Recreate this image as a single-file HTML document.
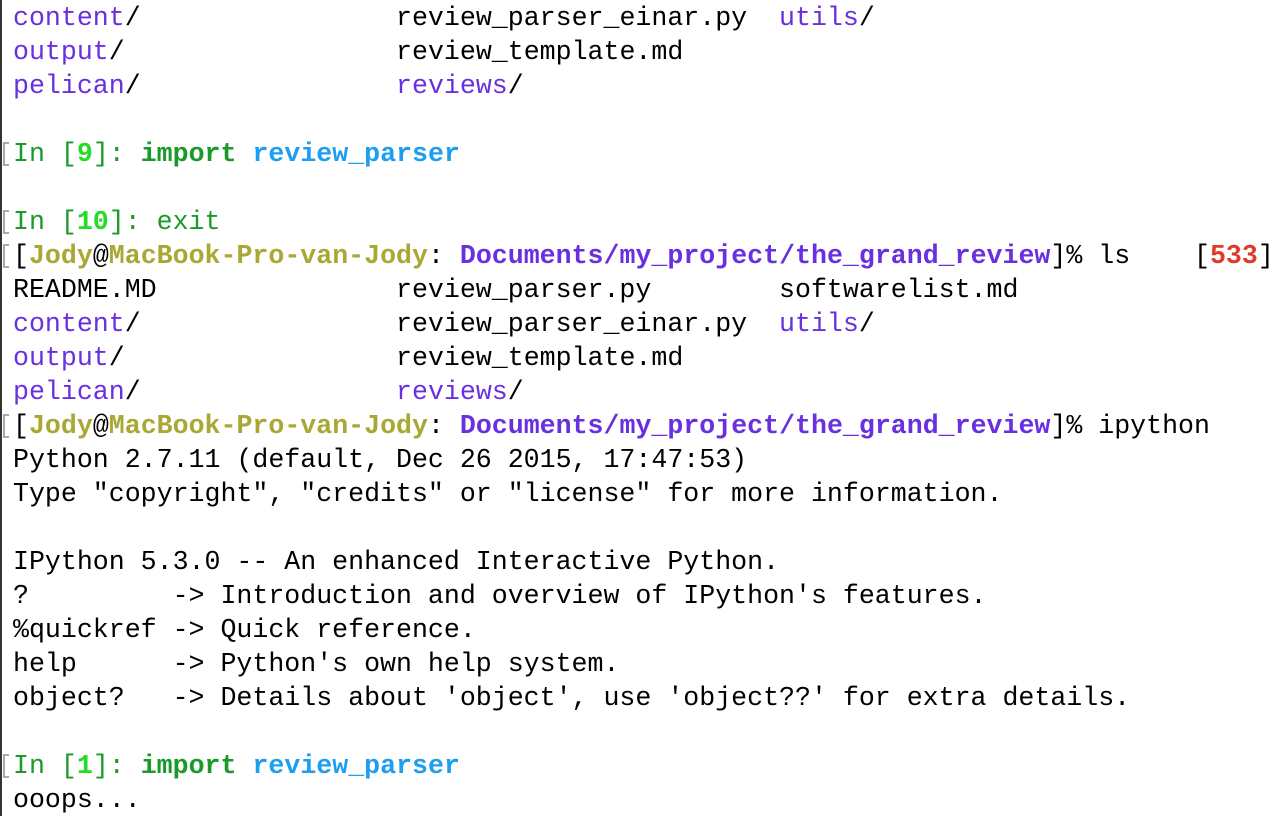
<!DOCTYPE html>
<html><head><style>
html,body{margin:0;padding:0;background:#fff;width:1288px;height:816px;overflow:hidden}
body{border-left:2px solid #333;box-sizing:border-box}
pre{margin:0;position:absolute;left:13px;top:1px;font-family:"Liberation Mono",monospace;font-size:26.6px;line-height:34px;color:#000;white-space:pre}
.p{color:#6a30e0}.pb{color:#6a30e0;font-weight:bold}
.g{color:#1a9a2a}.gb{color:#1a9a2a;font-weight:bold}.lg{color:#22dd22;font-weight:bold}
.b{color:#1e9ef0;font-weight:bold}.o{color:#a9a835;font-weight:bold}.r{color:#e03a2a;font-weight:bold}
.m{position:absolute;left:3px;width:6px;height:24px;border:2px solid #aaa;border-right:none;box-sizing:border-box}
</style></head><body>
<div class="m" style="top:142px"></div>
<div class="m" style="top:210px"></div>
<div class="m" style="top:244px"></div>
<div class="m" style="top:414px"></div>
<div class="m" style="top:754px"></div>
<pre><span class="p">content</span>/                review_parser_einar.py  <span class="p">utils</span>/
<span class="p">output</span>/                 review_template.md
<span class="p">pelican</span>/                <span class="p">reviews</span>/

<span class="g">In [</span><span class="lg">9</span><span class="g">]: </span><span class="gb">import</span> <span class="b">review_parser</span>

<span class="g">In [</span><span class="lg">10</span><span class="g">]: exit</span>
[<span class="o">Jody</span>@<span class="o">MacBook-Pro-van-Jody</span>: <span class="pb">Documents/my_project/the_grand_review</span>]% ls    [<span class="r">533</span>]
README.MD               review_parser.py        softwarelist.md
<span class="p">content</span>/                review_parser_einar.py  <span class="p">utils</span>/
<span class="p">output</span>/                 review_template.md
<span class="p">pelican</span>/                <span class="p">reviews</span>/
[<span class="o">Jody</span>@<span class="o">MacBook-Pro-van-Jody</span>: <span class="pb">Documents/my_project/the_grand_review</span>]% ipython
Python 2.7.11 (default, Dec 26 2015, 17:47:53)
Type "copyright", "credits" or "license" for more information.

IPython 5.3.0 -- An enhanced Interactive Python.
?         -> Introduction and overview of IPython's features.
%quickref -> Quick reference.
help      -> Python's own help system.
object?   -> Details about 'object', use 'object??' for extra details.

<span class="g">In [</span><span class="lg">1</span><span class="g">]: </span><span class="gb">import</span> <span class="b">review_parser</span>
ooops...</pre>
</body></html>
